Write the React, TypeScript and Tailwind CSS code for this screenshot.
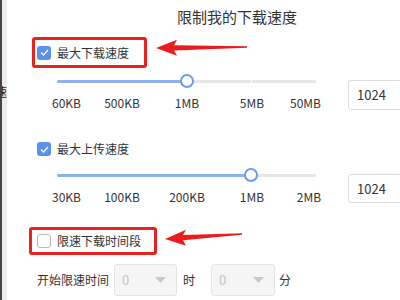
import React from "react";

const font = { fontFamily: '"Noto Sans CJK SC", "Noto Sans", sans-serif' };

function Check({ checked }: { checked: boolean }) {
  if (!checked) {
    return <span className="h-[14px] w-[14px] shrink-0 rounded-[3px] border border-[#b9b9b9] bg-white" />;
  }
  return (
    <span className="flex h-[14px] w-[14px] shrink-0 items-center justify-center rounded-[3px] bg-[#5b8ff0]">
      <svg width="9" height="7" viewBox="0 0 9 7" fill="none">
        <path d="M1 3.5 L3.5 6 L8 1" stroke="white" strokeWidth="1.3" />
      </svg>
    </span>
  );
}

function Slider({ pct }: { pct: number }) {
  return (
    <div className="relative ml-[50px] h-[16px] w-[259px]">
      <div className="absolute left-0 right-0 top-[6.5px] h-[3px] rounded-full bg-[#e6e6e6]" />
      <div className="absolute left-0 top-[6.5px] h-[3px] rounded-full bg-[#8fb2ef]" style={{ width: `${pct}%` }} />
      <div className="absolute left-[75%] top-[6px] h-[4px] w-[1px] bg-white" />
      <div
        className="absolute top-[1px] h-[14px] w-[14px] -translate-x-1/2 rounded-full border-[2.5px] border-[#6c9af0] bg-white"
        style={{ left: `${pct}%` }}
      />
    </div>
  );
}

function Labels({ items, cols }: { items: string[]; cols: string }) {
  return (
    <div className={`ml-[39.5px] mt-[6px] grid h-[16px] text-[12px] leading-[16px] text-[#333] ${cols}`}>
      {items.map((t) => (
        <span key={t} className="text-center">{t}</span>
      ))}
    </div>
  );
}

function Arrow({ w, h, tip, tail }: { w: number; h: number; tip: [number, number]; tail: [number, number] }) {
  const [tx, ty] = tip;
  const [ex, ey] = tail;
  const hx = tx + 20;
  const slope = (ey - ty) / (ex - tx);
  const my = ty + slope * 20;
  return (
    <svg width={w} height={h} viewBox={`0 0 ${w} ${h}`} className="shrink-0">
      <path
        d={`M${tx} ${ty} L${hx + 1} ${my - 8} L${hx - 2} ${my - 2.6} L${ex} ${ey - 0.8} L${ex} ${ey + 0.8} L${hx - 2} ${my + 2.6} L${hx + 1} ${my + 8} Z`}
        fill="#ec1c1c"
      />
    </svg>
  );
}

function Select({ w }: { w: string }) {
  return (
    <div className={`flex h-[32px] items-center justify-between rounded-[3px] border border-[#e4e4e4] bg-[#f5f5f5] pl-[7px] pr-[10px] ${w}`}>
      <span className="text-[13px] text-[#c4c4c4]">0</span>
      <svg width="11" height="6" viewBox="0 0 11 6">
        <path d="M0 0 H11 L5.5 6 Z" fill="#c8c8c8" />
      </svg>
    </div>
  );
}

export default function App() {
  return (
    <div className="flex h-[300px] w-[400px] overflow-hidden bg-white text-[#333]" style={font}>
      <div className="w-[2px] shrink-0 bg-[#444]" />
      <div className="flex w-[5px] shrink-0 flex-col overflow-hidden bg-[#ececec]">
        <span className="ml-[-7px] mt-[85px] text-[12px] leading-[14px] text-[#222]">速</span>
      </div>
      <div className="flex flex-1 flex-col">
        <div className="ml-[170px] mt-[7px] h-[20px] whitespace-nowrap text-[15px] leading-[20px] text-[#333]">
          限制我的下载速度
        </div>

        {/* max download */}
        <div className="mt-[10px] flex items-start">
          <div className="ml-[25px] flex h-[31px] w-[115px] items-center gap-[6px] rounded-[3px] border-[3px] border-[#e8231f] pl-[2px]">
            <Check checked />
            <span className="whitespace-nowrap text-[12px]">最大下载速度</span>
          </div>
          <div className="ml-[9px]">
            <Arrow w={92} h={31} tip={[0, 11]} tail={[91, 10]} />
          </div>
        </div>
        <div className="mt-[5px] flex items-start">
          <div className="flex flex-col">
            <Slider pct={50} />
            <Labels items={["60KB", "500KB", "1MB", "5MB", "50MB"]} cols="grid-cols-[40px_71px_59px_71px_36px]" />
          </div>
          <div className="ml-[24.5px] mt-[7px] flex h-[30px] w-[70px] shrink-0 items-center rounded-[3px] border border-[#dcdcdc] pl-[8px] text-[13px]">
            1024
          </div>
        </div>

        {/* max upload */}
        <div className="mt-[30px] ml-[30px] flex h-[16px] items-center gap-[6px]">
          <Check checked />
          <span className="whitespace-nowrap text-[12px]">最大上传速度</span>
        </div>
        <div className="mt-[10px] flex items-start">
          <div className="flex flex-col">
            <Slider pct={75} />
            <Labels items={["30KB", "100KB", "200KB", "1MB", "2MB"]} cols="grid-cols-[40px_71px_59px_71px_43px]" />
          </div>
          <div className="ml-[17.5px] mt-[7px] flex h-[29px] w-[70px] shrink-0 items-center rounded-[3px] border border-[#dcdcdc] pl-[8px] text-[13px]">
            1024
          </div>
        </div>

        {/* time range */}
        <div className="mt-[22px] flex items-start">
          <div className="ml-[22px] flex h-[28px] w-[128px] items-center gap-[6px] rounded-[3px] border-[3px] border-[#e8231f] pl-[5px]">
            <Check checked={false} />
            <span className="whitespace-nowrap text-[12px]">限速下载时间段</span>
          </div>
          <Arrow w={93} h={28} tip={[8, 12]} tail={[85, 7]} />
        </div>
        <div className="ml-[30px] mt-[9px] flex items-center text-[12px]">
          <span className="whitespace-nowrap">开始限速时间</span>
          <div className="ml-[5px]">
            <Select w="w-[63px]" />
          </div>
          <span className="ml-[6px]">时</span>
          <div className="ml-[16px]">
            <Select w="w-[64px]" />
          </div>
          <span className="ml-[4px]">分</span>
        </div>
      </div>
    </div>
  );
}
